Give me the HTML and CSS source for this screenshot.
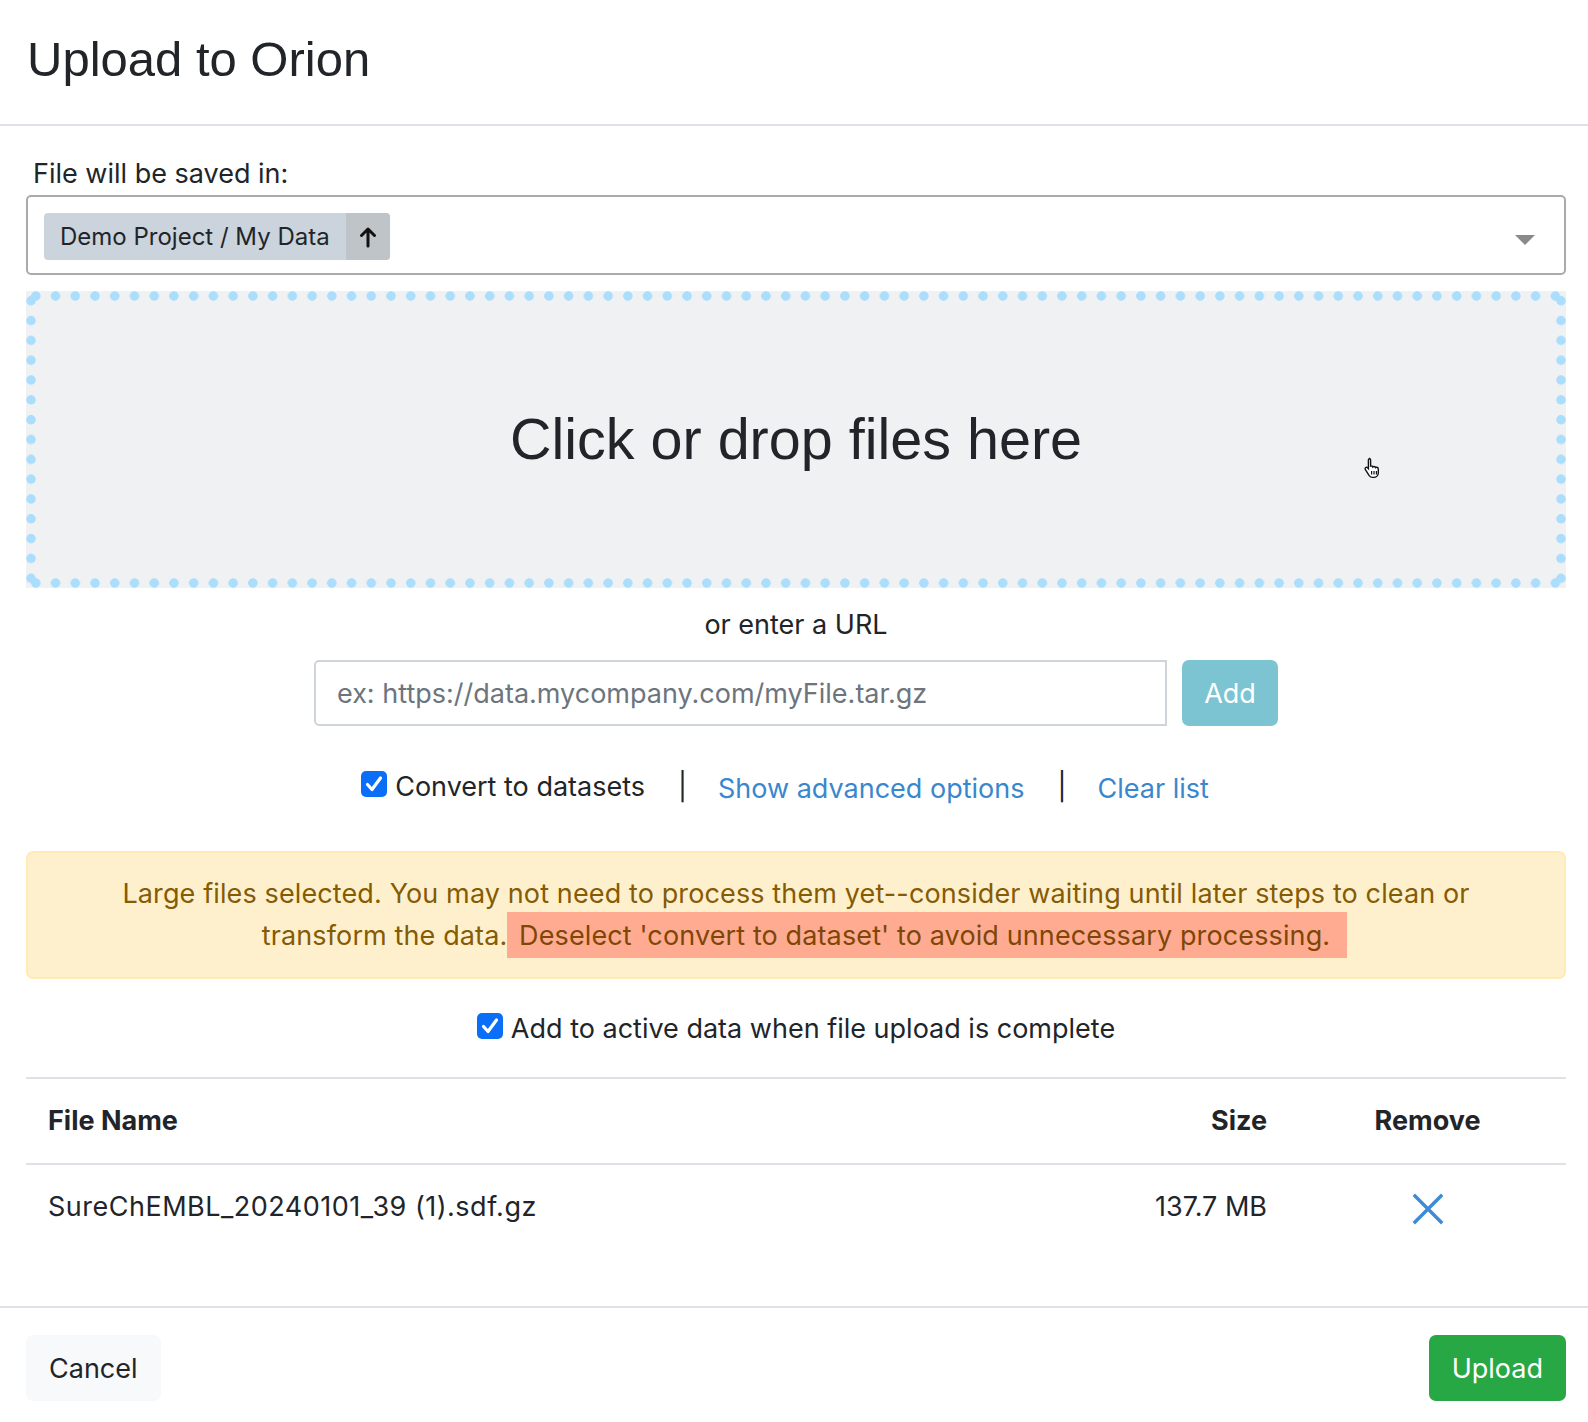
FILE: index.html
```html
<!DOCTYPE html>
<html>
<head>
<meta charset="utf-8">
<title>Upload to Orion</title>
<link rel="stylesheet" href="styles.css">
</head>
<body>
<div class="modal">
  <header class="modal-header">
    <h1 class="title">Upload to Orion</h1>
  </header>
  <main class="modal-body">
    <div class="field-label">File will be saved in:</div>
    <div class="select">
      <span class="chip">
        <span class="chip-text">Demo Project / My Data</span>
        <span class="chip-btn">
          <svg width="18" height="22" viewBox="0 0 18 22" fill="none" stroke="#111" stroke-width="3" stroke-linecap="round" stroke-linejoin="round"><path d="M9 20V3M2.5 9.5L9 3l6.5 6.5"/></svg>
        </span>
      </span>
      <span class="caret"></span>
    </div>
    <div class="dropzone">
      <span class="drop-text">Click or drop files here</span>
      <svg class="cursor" width="20" height="22" viewBox="0 0 20 22"><path d="M6 1.5c1 0 1.6.7 1.6 1.6V9l.6-.1c.9 0 1.4.5 1.6 1 .4-.4.9-.5 1.4-.4.7.1 1.1.6 1.3 1.1.4-.3.9-.4 1.4-.3.9.2 1.4 1 1.4 1.9v3.6c0 2.6-2 4.6-4.6 4.6H9.6c-1.4 0-2.6-.7-3.4-1.8L2.4 12.6c-.5-.7-.4-1.6.3-2.1.6-.4 1.4-.3 1.9.2l.8.9V3.1c0-.9.6-1.6 1.6-1.6z" fill="#fff" stroke="#111" stroke-width="1.4"/><path d="M8.6 14v3.5M11 14v3.5M13.4 14v3.5" stroke="#111" stroke-width="1.2"/></svg>
    </div>
    <div class="or-url">or enter a URL</div>
    <div class="url-group">
      <input class="url-input" type="text" placeholder="ex: https://data.mycompany.com/myFile.tar.gz">
      <button class="btn btn-add">Add</button>
    </div>
    <div class="options">
      <label class="check">
        <span class="box"><svg width="26" height="26" viewBox="0 0 26 26"><rect x="0" y="0" width="26" height="26" rx="5" fill="#0b6ef7"/><path d="M6.5 13.5l4.5 5 8.5-11.5" fill="none" stroke="#fff" stroke-width="3.2" stroke-linecap="round" stroke-linejoin="round"/></svg></span>
        Convert to datasets
      </label>
      <span class="sep">|</span>
      <a class="link" href="#">Show advanced options</a>
      <span class="sep">|</span>
      <a class="link" href="#">Clear list</a>
    </div>
    <div class="alert">Large files selected. You may not need to process them yet--consider waiting until later steps to clean or<br><span class="line-offset"></span>transform the data.<mark class="highlight"> Deselect 'convert to dataset' to avoid unnecessary processing.</mark></div>
    <div class="active-row">
      <label class="check">
        <span class="box"><svg width="26" height="26" viewBox="0 0 26 26"><rect x="0" y="0" width="26" height="26" rx="5" fill="#0b6ef7"/><path d="M6.5 13.5l4.5 5 8.5-11.5" fill="none" stroke="#fff" stroke-width="3.2" stroke-linecap="round" stroke-linejoin="round"/></svg></span>
        Add to active data when file upload is complete
      </label>
    </div>
    <table class="files">
      <thead>
        <tr>
          <th class="col-name">File Name</th>
          <th class="col-size">Size</th>
          <th class="col-remove">Remove</th>
        </tr>
      </thead>
      <tbody>
        <tr>
          <td class="col-name">SureChEMBL_20240101_39 (1).sdf.gz</td>
          <td class="col-size">137.7 MB</td>
          <td class="col-remove"><svg class="remove-x" width="32" height="32" viewBox="0 0 32 32"><path d="M3 3L29 29M29 3L3 29" stroke="#3d8bd4" stroke-width="3.4" stroke-linecap="square"/></svg></td>
        </tr>
      </tbody>
    </table>
  </main>
  <footer class="modal-footer">
    <button class="btn btn-cancel">Cancel</button>
    <button class="btn btn-upload">Upload</button>
  </footer>
</div>
</body>
</html>
```

FILE: styles.css
```css
* { box-sizing: border-box; }

html, body {
  margin: 0;
  padding: 0;
  background: #ffffff;
}

body {
  font-family: "Inter", "Liberation Sans", sans-serif;
  font-size: 27px;
  line-height: 42px;
  color: #212529;
}

.modal {
  width: 1588px;
}

.modal-header {
  height: 126px;
  padding: 30px 26px 0 27px;
  border-bottom: 2px solid #dee2e6;
}

.title {
  margin: 0;
  font-family: "Liberation Sans", Arial, sans-serif;
  font-weight: 400;
  font-size: 49px;
  line-height: 59px;
  color: #212529;
}

.modal-body {
  padding: 27px 22px 57px 26px;
}

.field-label {
  padding-left: 7px;
  height: 42px;
}

.select {
  height: 80px;
  border: 2px solid #a8aaad;
  border-radius: 5px;
  padding: 0 16px;
  display: flex;
  align-items: center;
}

.chip {
  display: flex;
  height: 47px;
  margin-top: 3px;
  background: #cbd3dc;
  border-radius: 4px;
  overflow: hidden;
}

.chip-text {
  display: flex;
  align-items: center;
  padding: 0 16px;
  font-size: 24px;
}

.chip-btn {
  width: 44px;
  background: #bfc4c9;
  display: flex;
  align-items: center;
  justify-content: center;
}

.caret {
  margin-left: auto;
  margin-right: 13px;
  width: 0;
  height: 0;
  border-left: 10px solid transparent;
  border-right: 10px solid transparent;
  border-top: 10px solid #8a8a8a;
  margin-top: 9px;
}

.dropzone {
  position: relative;
  margin-top: 16px;
  height: 297px;
  background-color: #f0f1f3;
  background-image:
    radial-gradient(circle at 50% 50%, #abdefd 4.4px, rgba(171, 222, 253, 0) 5px),
    radial-gradient(circle at 50% 50%, #abdefd 4.4px, rgba(171, 222, 253, 0) 5px),
    radial-gradient(circle at 50% 50%, #abdefd 4.4px, rgba(171, 222, 253, 0) 5px),
    radial-gradient(circle at 50% 50%, #abdefd 4.4px, rgba(171, 222, 253, 0) 5px);
  background-size: 19.6px 10px, 19.6px 10px, 10px 19.4px, 10px 19.4px;
  background-position: 0 0, 0 100%, 0 0, 100% 0;
  background-repeat: space no-repeat, space no-repeat, no-repeat space, no-repeat space;
  display: flex;
  align-items: center;
  justify-content: center;
}

.drop-text {
  font-family: "Liberation Sans", Arial, sans-serif;
  font-size: 57.5px;
  line-height: 66px;
  color: #212529;
  margin-top: -2px;
}

.cursor {
  position: absolute;
  left: 1337px;
  top: 166px;
}

.or-url {
  margin-top: 16px;
  text-align: center;
}

.url-group {
  margin-top: 14px;
  display: flex;
  justify-content: center;
  gap: 15px;
}

.url-input {
  width: 853px;
  height: 66px;
  border: 2px solid #ced4da;
  border-radius: 5px 0 0 5px;
  padding: 0 21px;
  font-family: "Inter", "Liberation Sans", sans-serif;
  font-size: 27px;
  color: #495057;
  background: #fff;
  outline: none;
}

.url-input::placeholder {
  color: #6c757d;
}

.btn {
  border: none;
  font-family: "Inter", "Liberation Sans", sans-serif;
  font-size: 27px;
  height: 66px;
  border-radius: 7px;
  padding: 0 23px;
  cursor: pointer;
}

.btn-add {
  width: 96px;
  padding: 0;
  background: #7cc4d2;
  color: #ffffff;
}

.options {
  margin-top: 38px;
  padding-right: 22px;
  display: flex;
  justify-content: center;
  align-items: center;
}

.check {
  display: inline-flex;
  align-items: center;
}

.box {
  display: inline-flex;
  width: 26px;
  height: 26px;
  margin-right: 8px;
  margin-top: -6px;
}

.sep {
  padding: 0 31px 0 33px;
  color: #212529;
}

.link {
  color: #3a87cd;
  text-decoration: none;
  padding-top: 4px;
}

.alert {
  margin-top: 41px;
  border: 2px solid #ffecb5;
  background: #fff0cd;
  border-radius: 7px;
  padding: 20px 20px;
  text-align: center;
  color: #855b04;
  letter-spacing: 0.12px;
}

.line-offset {
  display: inline-block;
  width: 17px;
}

.highlight {
  background: #ffab92;
  color: #7e4706;
  padding: 7px 17px 6px 4px;
}

.active-row {
  margin-top: 29px;
  display: flex;
  justify-content: center;
}

.files {
  margin-top: 27px;
  width: 100%;
  border-collapse: collapse;
}

.files th {
  font-weight: 700;
  padding: 21px 22px;
  border-top: 2px solid #dee2e6;
  border-bottom: 2px solid #dee2e6;
  text-align: left;
}

.files td {
  padding: 21px 22px;
}

.files td.col-name {
  letter-spacing: 0.5px;
}

.files .col-size {
  width: 200px;
  text-align: right;
}

.files .col-remove {
  width: 277px;
  text-align: center;
}

.remove-x {
  vertical-align: middle;
}

.modal-footer {
  border-top: 2px solid #dee2e6;
  padding: 27px 22px 20px 26px;
  display: flex;
  justify-content: space-between;
}

.btn-cancel {
  background: #f8f9fa;
  color: #212529;
}

.btn-upload {
  background: #28a745;
  color: #ffffff;
}
```
